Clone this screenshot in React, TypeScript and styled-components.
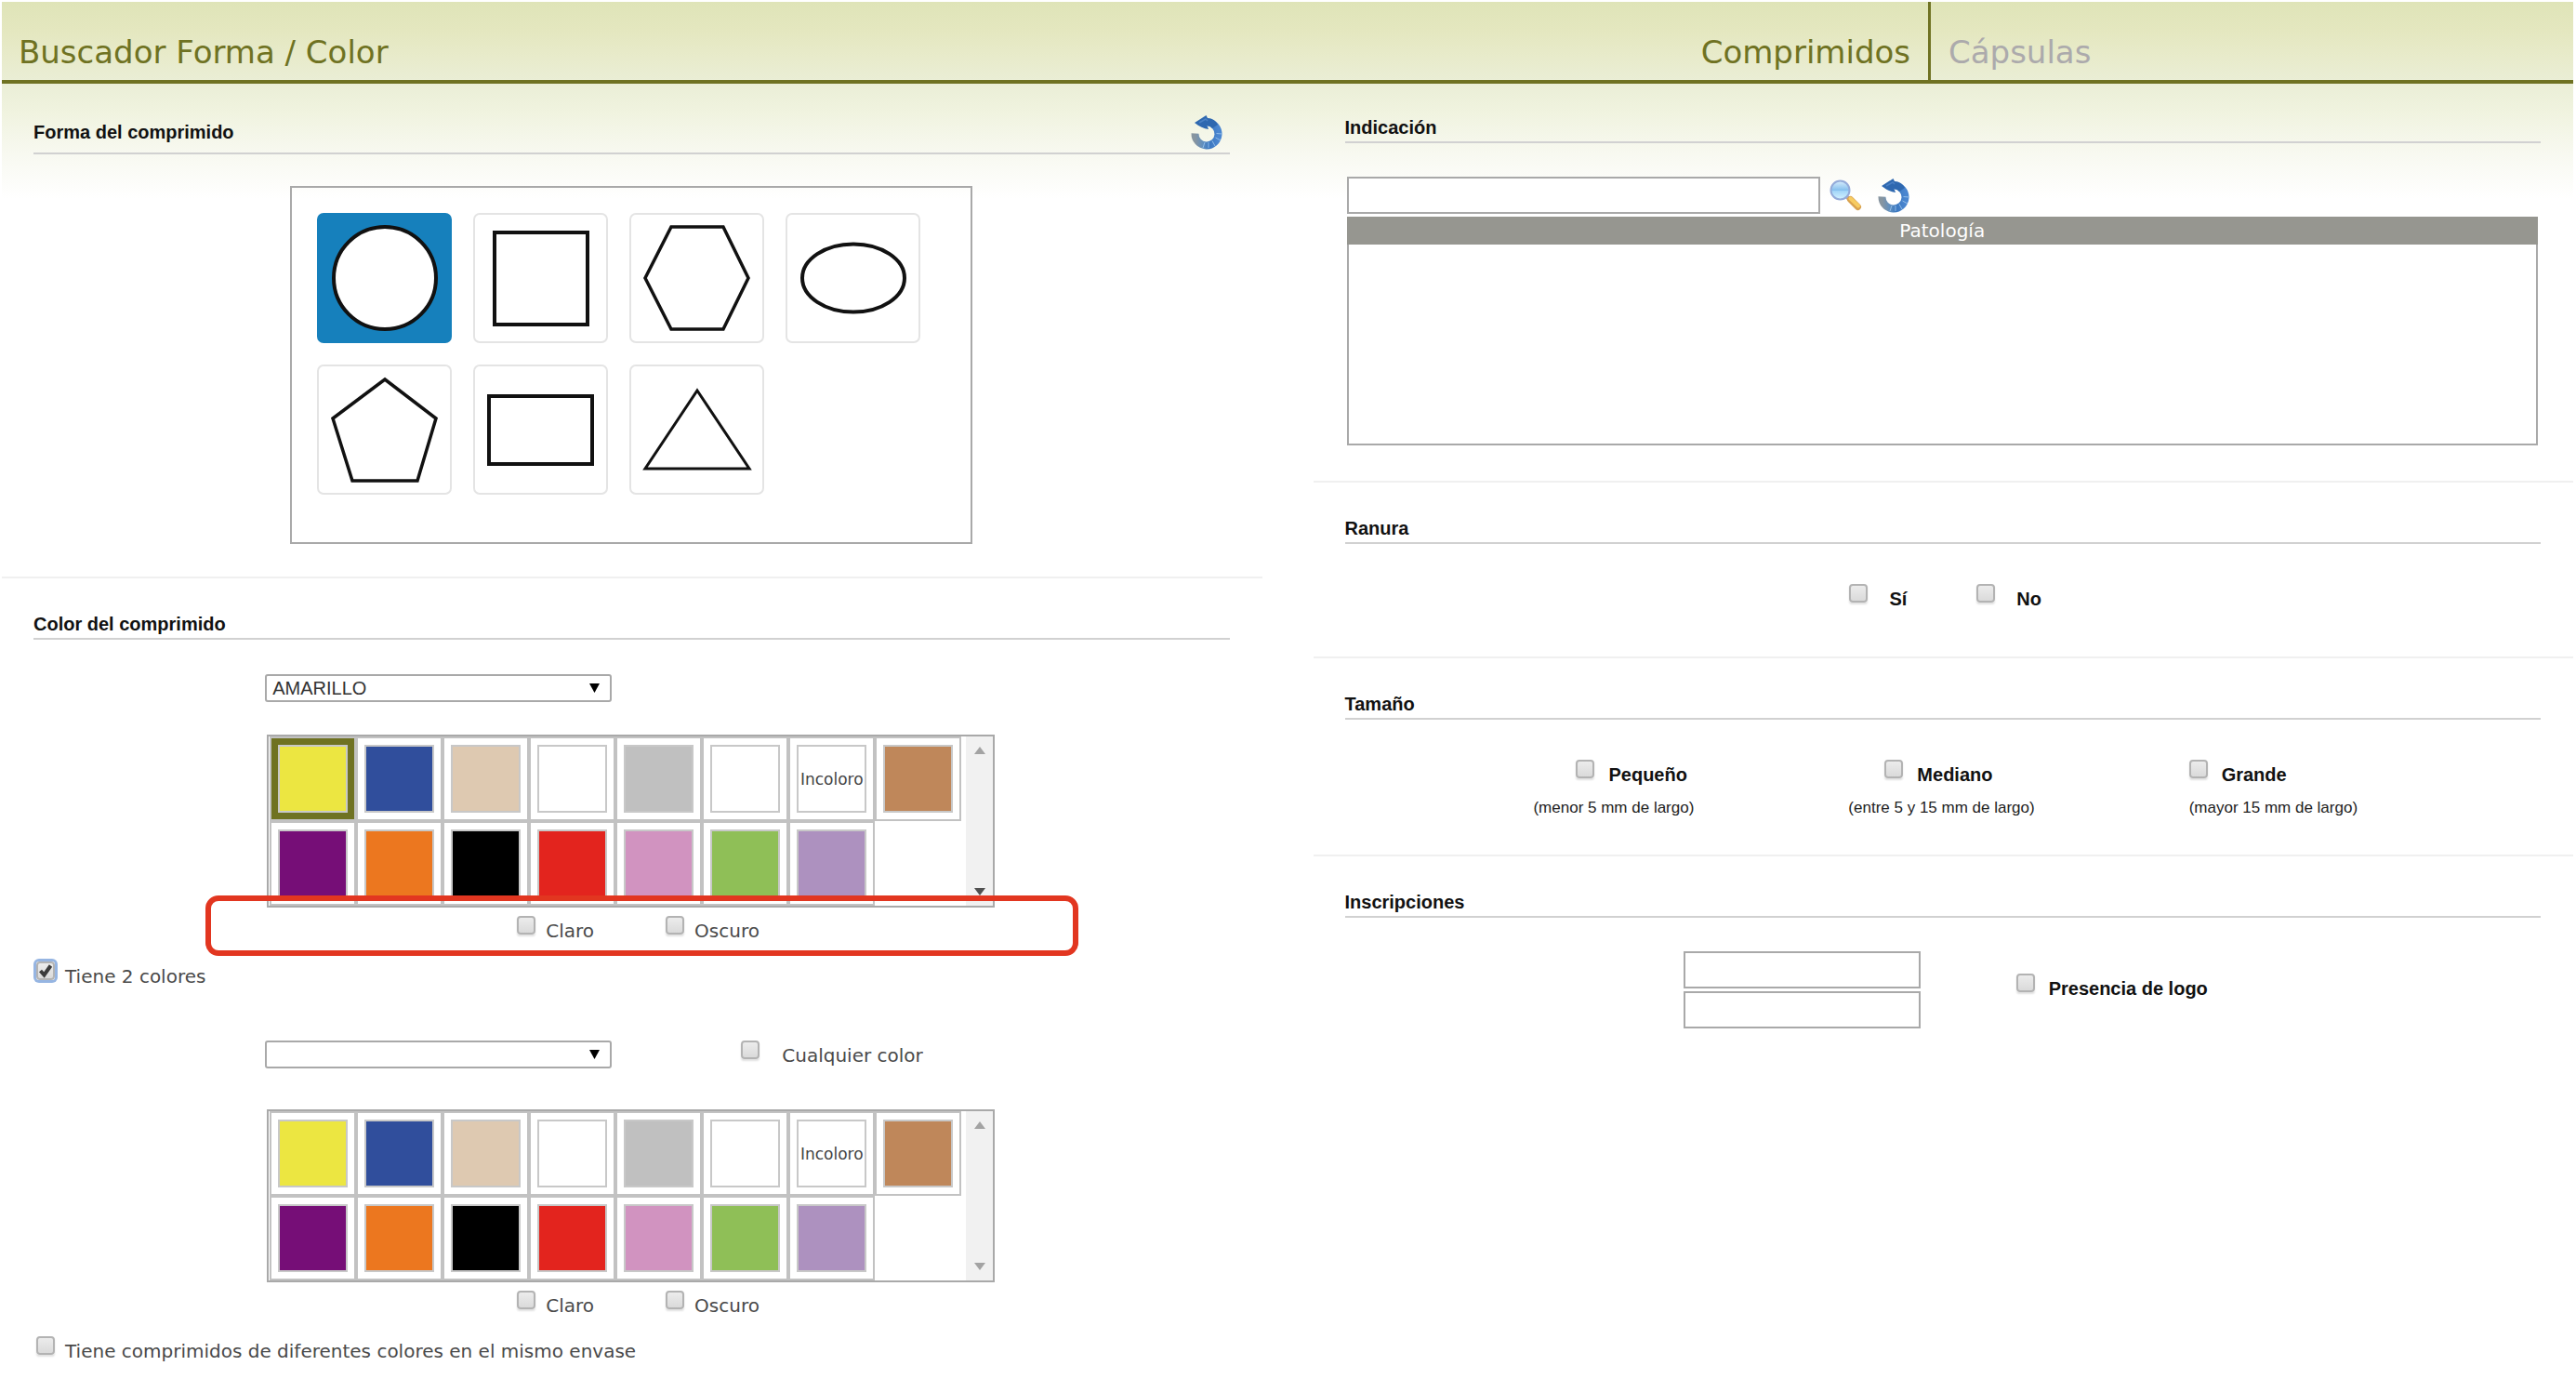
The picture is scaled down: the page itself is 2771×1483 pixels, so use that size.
import React, { useId, useState } from "react";
import styled, { createGlobalStyle } from "styled-components";

const olive = "#6f7222";
const line = "#a9a9a9";
const sans = `"Liberation Sans", Arial, sans-serif`;
const wide = `"DejaVu Sans", Verdana, sans-serif`;

const GlobalStyle = createGlobalStyle`
  * { box-sizing: border-box; }
  body { margin: 0; background: #fff; }
  button, input, select { font: inherit; margin: 0; padding: 0; }
`;

const Page = styled.div`
  margin: 2px 3px 0 2px;
  padding-bottom: 18px;
  font-family: ${wide};
  font-size: 20px;
  line-height: 24px;
  color: #4a4a4a;
  background: linear-gradient(
      #dfe4b8 0px, #e4e7bf 30px, #e8ebcb 60px, #eaeed6 86px,
      #f0f3df 118px, #f8f9f1 165px, #ffffff 212px
    ) no-repeat #fff;
  background-size: 100% 212px;
`;

const Header = styled.header`
  display: flex;
  height: 88px;
  border-bottom: 4px solid ${olive};
`;

const Title = styled.h1`
  flex: 1;
  margin: 0;
  padding: 34px 0 0 18px;
  font-size: 34px;
  line-height: 40px;
  font-weight: normal;
  color: ${olive};
`;

const Tabs = styled.nav`
  display: flex;
  flex: 0 0 34%;
`;

const Tab = styled.a<{ $active?: boolean }>`
  padding: 34px 19px 0;
  font-size: 34px;
  line-height: 40px;
  text-decoration: none;
  text-align: ${(p) => (p.$active ? "right" : "left")};
  flex: ${(p) => (p.$active ? "1" : "0 0 691px")};
  color: ${(p) => (p.$active ? olive : "#acaaac")};
  border-right: ${(p) => (p.$active ? `3px solid ${olive}` : "0")};
`;

const Columns = styled.main`
  display: grid;
  grid-template-columns: 1fr 1fr;
  column-gap: 55px;
  align-items: start;
`;

const Section = styled.section<{ $first?: boolean; $top?: number; $bottom?: number }>`
  padding: ${(p) => p.$top ?? 37}px 35px ${(p) => p.$bottom ?? 0}px 34px;
  border-top: ${(p) => (p.$first ? "0" : "2px solid #f0f0f0")};
`;

const Heading = styled.div<{ $tight?: boolean }>`
  display: flex;
  align-items: center;
  justify-content: space-between;
  padding: 0 7px ${(p) => (p.$tight ? 2 : 3)}px 0;
  border-bottom: 2px solid #d1d1d1;
`;

const HeadingText = styled.h2`
  margin: 0;
  font: bold 20px/24px ${sans};
  color: #111;
`;

const IconButton = styled.button`
  display: flex;
  align-items: center;
  justify-content: center;
  width: 36px;
  height: 40px;
  border: 0;
  background: none;
  cursor: pointer;
`;

/* Shapes */

const ShapeBox = styled.div`
  display: grid;
  grid-template-columns: repeat(4, 145px);
  grid-auto-rows: 140px;
  gap: 23px;
  width: 734px;
  height: 385px;
  margin: 34px auto 0;
  padding: 27px;
  border: 2px solid ${line};
`;

const ShapeTile = styled.button<{ $selected: boolean }>`
  display: block;
  border: 2px solid ${(p) => (p.$selected ? "#1680bc" : "#e4e4e4")};
  border-radius: 7px;
  background: ${(p) => (p.$selected ? "#1680bc" : "#fff")};
  cursor: pointer;

  svg {
    display: block;
    width: 141px;
    height: 136px;
    fill: #fff;
    stroke: #111;
    stroke-width: 4;
  }
`;

const shapes = [
  { name: "Redondo", art: <ellipse cx="71" cy="68" rx="55" ry="55" /> },
  { name: "Cuadrado", art: <rect x="21" y="19" width="100" height="99" /> },
  { name: "Hexagonal", art: <path d="M43 13H99L126 68L99 123H43L15 68Z" strokeWidth="3.5" /> },
  { name: "Ovalado", art: <ellipse cx="71" cy="68" rx="55" ry="36.5" /> },
  { name: "Pentagonal", art: <path d="M71 14L126 56L106 123H36L15 56Z" strokeWidth="3.5" /> },
  { name: "Rectangular", art: <rect x="15" y="32" width="111" height="73" /> },
  { name: "Triangular", art: <path d="M71 26L127 110H15Z" strokeWidth="3" /> },
];

/* Check boxes */

const CheckLabel = styled.label<{ $gap?: number; $strong?: boolean }>`
  display: inline-flex;
  align-items: flex-start;
  gap: ${(p) => p.$gap ?? 11}px;
  height: 28px;
  white-space: nowrap;
  color: ${(p) => (p.$strong ? "#111" : "#4a4a4a")};
  font-family: ${(p) => (p.$strong ? sans : wide)};
  font-weight: ${(p) => (p.$strong ? "bold" : "normal")};
`;

const CheckText = styled.span`
  padding-top: 4px;
`;

const CheckFrame = styled.span<{ $focus?: boolean }>`
  display: grid;
  width: 20px;
  height: 20px;
  border-radius: 3px;
  box-shadow: ${(p) => (p.$focus ? "0 0 0 3px #96b5e2" : "0 2px 2px rgba(0, 0, 0, 0.12)")};

  > * { grid-area: 1 / 1; }
  svg { width: 20px; height: 20px; pointer-events: none; }
`;

const CheckInput = styled.input`
  appearance: none;
  width: 20px;
  height: 20px;
  border: 2px solid #b3b3b3;
  border-radius: 4px;
  background: linear-gradient(#ececec, #dadada);
`;

function Check(props: { label: string; gap?: number; strong?: boolean; initial?: boolean }) {
  const [on, setOn] = useState(!!props.initial);
  const id = useId();
  return (
    <CheckLabel htmlFor={id} $gap={props.gap} $strong={props.strong}>
      <CheckFrame $focus={on}>
        <CheckInput id={id} type="checkbox" checked={on} onChange={() => setOn(!on)} />
        {on && (
          <svg viewBox="0 0 20 20" aria-hidden="true">
            <path d="M4.5 10L8.5 14.5L15.5 4.5" fill="none" stroke="#3c3c3c" strokeWidth="4" />
          </svg>
        )}
      </CheckFrame>
      <CheckText>{props.label}</CheckText>
    </CheckLabel>
  );
}

/* Colours */

const ColorArea = styled.div`
  width: 788px;
  margin: 0 auto;
`;

const SelectRow = styled.div<{ $top: number; $bottom: number }>`
  display: flex;
  gap: 139px;
  height: 30px;
  margin: ${(p) => p.$top}px 0 ${(p) => p.$bottom}px;
`;

const SelectFrame = styled.span`
  display: grid;
  align-items: center;
  width: 373px;
  height: 30px;

  > * { grid-area: 1 / 1; }
  svg { justify-self: end; margin-right: 13px; pointer-events: none; }
`;

const Select = styled.select`
  appearance: none;
  width: 100%;
  height: 30px;
  padding: 0 30px 0 6px;
  border: 2px solid ${line};
  border-radius: 3px;
  background: #fff;
  color: #333;
  font: 20px/24px ${sans};
`;

const PaletteBox = styled.div`
  display: flex;
  justify-content: space-between;
  width: 783px;
  height: 186px;
  margin-left: 2px;
  border: 2px solid ${line};
  overflow: hidden;
`;

const Cells = styled.div`
  display: grid;
  grid-template-columns: repeat(8, 93px);
  grid-auto-rows: 91px;
  padding-left: 1px;
`;

const Cell = styled.button<{ $selected: boolean }>`
  display: flex;
  padding: 7px;
  border: 2px solid #c2c2c2;
  background: ${(p) => (p.$selected ? olive : "#fff")};
  cursor: pointer;
`;

const Swatch = styled.span<{ $color: string }>`
  display: flex;
  align-items: center;
  justify-content: center;
  flex: 1;
  align-self: stretch;
  border: 2px solid #c8c8c8;
  background: ${(p) => p.$color};
  color: #444;
  font: 17px/20px ${wide};
`;

const Scroller = styled.div`
  display: flex;
  flex-direction: column;
  justify-content: space-between;
  width: 29px;
  background: #f1f1f1;
`;

const ScrollButton = styled.button`
  display: flex;
  align-items: center;
  justify-content: center;
  width: 29px;
  height: 30px;
  border: 0;
  background: none;
`;

const ShadeRow = styled.div`
  position: relative;
  display: flex;
  gap: 77px;
  margin: 9px 0 21px;
  padding-left: 271px;
`;

const Highlight = styled.div`
  position: absolute;
  inset: -22px -87px -15px -64px;
  border: 6px solid #e23620;
  border-radius: 14px;
  pointer-events: none;
`;

const LeftCheck = styled.div`
  display: flex;
  padding-left: 3px;
`;

const colors = [
  ["Amarillo", "#ece641"], ["Azul", "#304e9c"], ["Beige", "#dec9b1"], ["Blanco", "#fff"],
  ["Gris", "#c0c0c0"], ["Hueso", "#fff"], ["Incoloro", "#fff"], ["Marrón", "#bf875a"],
  ["Morado", "#760e77"], ["Naranja", "#ec771f"], ["Negro", "#000"], ["Rojo", "#e3241e"],
  ["Rosa", "#d193c0"], ["Verde", "#8fbf57"], ["Violeta", "#ad91bf"],
];

function ColorSelect({ value, onChange, label }: { value: string; onChange: (v: string) => void; label: string }) {
  return (
    <SelectFrame>
      <Select aria-label={label} value={value} onChange={(e) => onChange(e.target.value)}>
        <option value="" />
        {colors.map(([name]) => (
          <option key={name} value={name}>{name.toUpperCase()}</option>
        ))}
      </Select>
      <svg width="11" height="10" viewBox="0 0 11 10" aria-hidden="true">
        <path d="M0 0H11L5.5 10Z" fill="#000" />
      </svg>
    </SelectFrame>
  );
}

function Palette({ value, onPick, canScroll }: { value: string; onPick: (v: string) => void; canScroll?: boolean }) {
  return (
    <PaletteBox>
      <Cells>
        {colors.map(([name, color]) => (
          <Cell key={name} type="button" aria-label={name} $selected={value === name} onClick={() => onPick(name)}>
            <Swatch $color={color}>{name === "Incoloro" ? name : null}</Swatch>
          </Cell>
        ))}
      </Cells>
      <Scroller>
        <ScrollButton type="button" aria-label="Subir">
          <svg width="12" height="8" viewBox="0 0 12 8"><path d="M0 8H12L6 0Z" fill="#a3a3a3" /></svg>
        </ScrollButton>
        <ScrollButton type="button" aria-label="Bajar">
          <svg width="12" height="8" viewBox="0 0 12 8"><path d="M0 0H12L6 8Z" fill={canScroll ? "#505050" : "#a3a3a3"} /></svg>
        </ScrollButton>
      </Scroller>
    </PaletteBox>
  );
}

/* Search by indication */

const SearchRow = styled.div`
  display: flex;
  align-items: center;
  margin: 36px 0 3px 2px;
`;

const TextInput = styled.input<{ $width: number }>`
  width: ${(p) => p.$width}px;
  height: 40px;
  padding: 0 8px;
  border: 2px solid ${line};
  background: #fff;
`;

const SearchIcons = styled.div`
  display: flex;
  gap: 15px;
  margin-left: 10px;
`;

const Results = styled.table`
  width: calc(100% - 5px);
  margin-left: 2px;
  border-collapse: separate;
  border-spacing: 0;
  border: 2px solid ${line};
  border-top: 0;
`;

const ResultsHead = styled.th`
  height: 30px;
  padding: 0;
  background: #969690;
  box-shadow: -2px 0 #969690, 2px 0 #969690;
  color: #fff;
  font-weight: normal;
`;

const ResultsBody = styled.td`
  height: 214px;
  padding: 0;
`;

/* Right-hand choices */

const Choices = styled.div<{ $gap: number; $top?: number }>`
  display: flex;
  justify-content: center;
  align-items: center;
  gap: ${(p) => p.$gap}px;
  margin-top: ${(p) => p.$top ?? 43}px;
  padding-left: 6px;
`;

const SizeOption = styled.div<{ $indent: number }>`
  display: flex;
  flex-direction: column;
  gap: 14px;

  label { margin-left: ${(p) => p.$indent}px; }
`;

const Caption = styled.small`
  font: 17px/20px ${sans};
  color: #222;
`;

const Stack = styled.div`
  display: flex;
  flex-direction: column;
  gap: 3px;
`;

const LogoOption = styled.div`
  display: flex;
  padding-bottom: 7px;
`;

function RefreshIcon() {
  const id = useId();
  return (
    <svg width="36" height="38" viewBox="0 0 36 38" aria-hidden="true">
      <defs>
        <linearGradient id={id} x1="0" x2="1" y1="0" y2="0">
          <stop offset="0" stopColor="#8795a0" />
          <stop offset="0.35" stopColor="#5f8fc0" />
          <stop offset="0.6" stopColor="#3b77bf" />
          <stop offset="1" stopColor="#4a86d0" />
        </linearGradient>
      </defs>
      <path d="M19 8.5A12.500 12.500 0 1 1 5.500 20.500" fill="none" stroke={`url(#${id})`} strokeWidth="8" />
      <path d="M16 30L14 36M20 30V36M24 28.5L27 34M27.500 25L33 28M28.500 20.500L35 21" stroke="#8fbbe8" strokeWidth="1" />
      <path d="M5 9L17.500 1L19 4C24 4 28 7 30 11L24 15C22.500 13 20.500 12 18.500 12L20 16C15 15.500 10 13 5 9Z" fill="#2e68b0" />
      <path d="M10 9L17 5L19 7" fill="none" stroke="#4a80c4" strokeWidth="1.5" />
    </svg>
  );
}

function SearchIcon() {
  const id = useId();
  return (
    <svg width="36" height="36" viewBox="0 0 36 36" aria-hidden="true">
      <defs>
        <linearGradient id={id} x1="0" x2="0" y1="0" y2="1">
          <stop offset="0" stopColor="#d9eefc" />
          <stop offset="0.5" stopColor="#86c0ee" />
          <stop offset="0.55" stopColor="#a3d5f8" />
          <stop offset="1" stopColor="#d4f3ff" />
        </linearGradient>
      </defs>
      <path d="M18 19L22 23" stroke="#b9a7a0" strokeWidth="4" />
      <path d="M22.500 22.500L30.500 30.500" stroke="#d9a250" strokeWidth="7" strokeLinecap="round" />
      <path d="M22.500 21.500L31 29.500" stroke="#f7cc62" strokeWidth="4" strokeLinecap="round" />
      <circle cx="11.5" cy="12.5" r="10" fill={`url(#${id})`} stroke="#94abd9" strokeWidth="2" />
    </svg>
  );
}

export default function App() {
  const [shape, setShape] = useState("Redondo");
  const [first, setFirst] = useState("Amarillo");
  const [second, setSecond] = useState("");
  return (
    <>
      <GlobalStyle />
      <Page>
        <Header>
          <Title>Buscador Forma / Color</Title>
          <Tabs>
            <Tab href="#comprimidos" $active>Comprimidos</Tab>
            <Tab href="#capsulas">Cápsulas</Tab>
          </Tabs>
        </Header>
        <Columns>
          <div>
            <Section $first $top={32} $bottom={35}>
              <Heading $tight>
                <HeadingText>Forma del comprimido</HeadingText>
                <IconButton type="button" aria-label="Restablecer forma"><RefreshIcon /></IconButton>
              </Heading>
              <ShapeBox>
                {shapes.map((s) => (
                  <ShapeTile key={s.name} type="button" aria-label={s.name} $selected={shape === s.name} onClick={() => setShape(s.name)}>
                    <svg viewBox="0 0 141 136">{s.art}</svg>
                  </ShapeTile>
                ))}
              </ShapeBox>
            </Section>
            <Section>
              <Heading><HeadingText>Color del comprimido</HeadingText></Heading>
              <ColorArea>
                <SelectRow $top={37} $bottom={35}>
                  <ColorSelect label="Color" value={first} onChange={setFirst} />
                </SelectRow>
                <Palette value={first} onPick={setFirst} canScroll />
                <ShadeRow>
                  <Check label="Claro" />
                  <Check label="Oscuro" />
                  <Highlight />
                </ShadeRow>
              </ColorArea>
              <LeftCheck><Check label="Tiene 2 colores" initial /></LeftCheck>
              <ColorArea>
                <SelectRow $top={57} $bottom={44}>
                  <ColorSelect label="Segundo color" value={second} onChange={setSecond} />
                  <Check label="Cualquier color" gap={24} />
                </SelectRow>
                <Palette value={second} onPick={setSecond} />
                <ShadeRow>
                  <Check label="Claro" />
                  <Check label="Oscuro" />
                </ShadeRow>
              </ColorArea>
              <LeftCheck><Check label="Tiene comprimidos de diferentes colores en el mismo envase" /></LeftCheck>
            </Section>
          </div>
          <div>
            <Section $first $top={35} $bottom={38}>
              <Heading><HeadingText>Indicación</HeadingText></Heading>
              <SearchRow>
                <TextInput $width={509} type="text" aria-label="Indicación" />
                <SearchIcons>
                  <IconButton type="button" aria-label="Buscar"><SearchIcon /></IconButton>
                  <IconButton type="button" aria-label="Restablecer"><RefreshIcon /></IconButton>
                </SearchIcons>
              </SearchRow>
              <Results>
                <thead><tr><ResultsHead scope="col">Patología</ResultsHead></tr></thead>
                <tbody><tr><ResultsBody /></tr></tbody>
              </Results>
            </Section>
            <Section $bottom={50}>
              <Heading><HeadingText>Ranura</HeadingText></Heading>
              <Choices $gap={75}>
                <Check label="Sí" gap={23} strong />
                <Check label="No" gap={23} strong />
              </Choices>
            </Section>
            <Section $bottom={40}>
              <Heading><HeadingText>Tamaño</HeadingText></Heading>
              <Choices $gap={166}>
                <SizeOption $indent={46}>
                  <Check label="Pequeño" gap={15} strong />
                  <Caption>(menor 5 mm de largo)</Caption>
                </SizeOption>
                <SizeOption $indent={39}>
                  <Check label="Mediano" gap={15} strong />
                  <Caption>(entre 5 y 15 mm de largo)</Caption>
                </SizeOption>
                <SizeOption $indent={0}>
                  <Check label="Grande" gap={15} strong />
                  <Caption>(mayor 15 mm de largo)</Caption>
                </SizeOption>
              </Choices>
            </Section>
            <Section>
              <Heading><HeadingText>Inscripciones</HeadingText></Heading>
              <Choices $gap={103} $top={36}>
                <Stack>
                  <TextInput $width={255} type="text" aria-label="Inscripción 1" />
                  <TextInput $width={255} type="text" aria-label="Inscripción 2" />
                </Stack>
                <LogoOption><Check label="Presencia de logo" gap={15} strong /></LogoOption>
              </Choices>
            </Section>
          </div>
        </Columns>
      </Page>
    </>
  );
}
